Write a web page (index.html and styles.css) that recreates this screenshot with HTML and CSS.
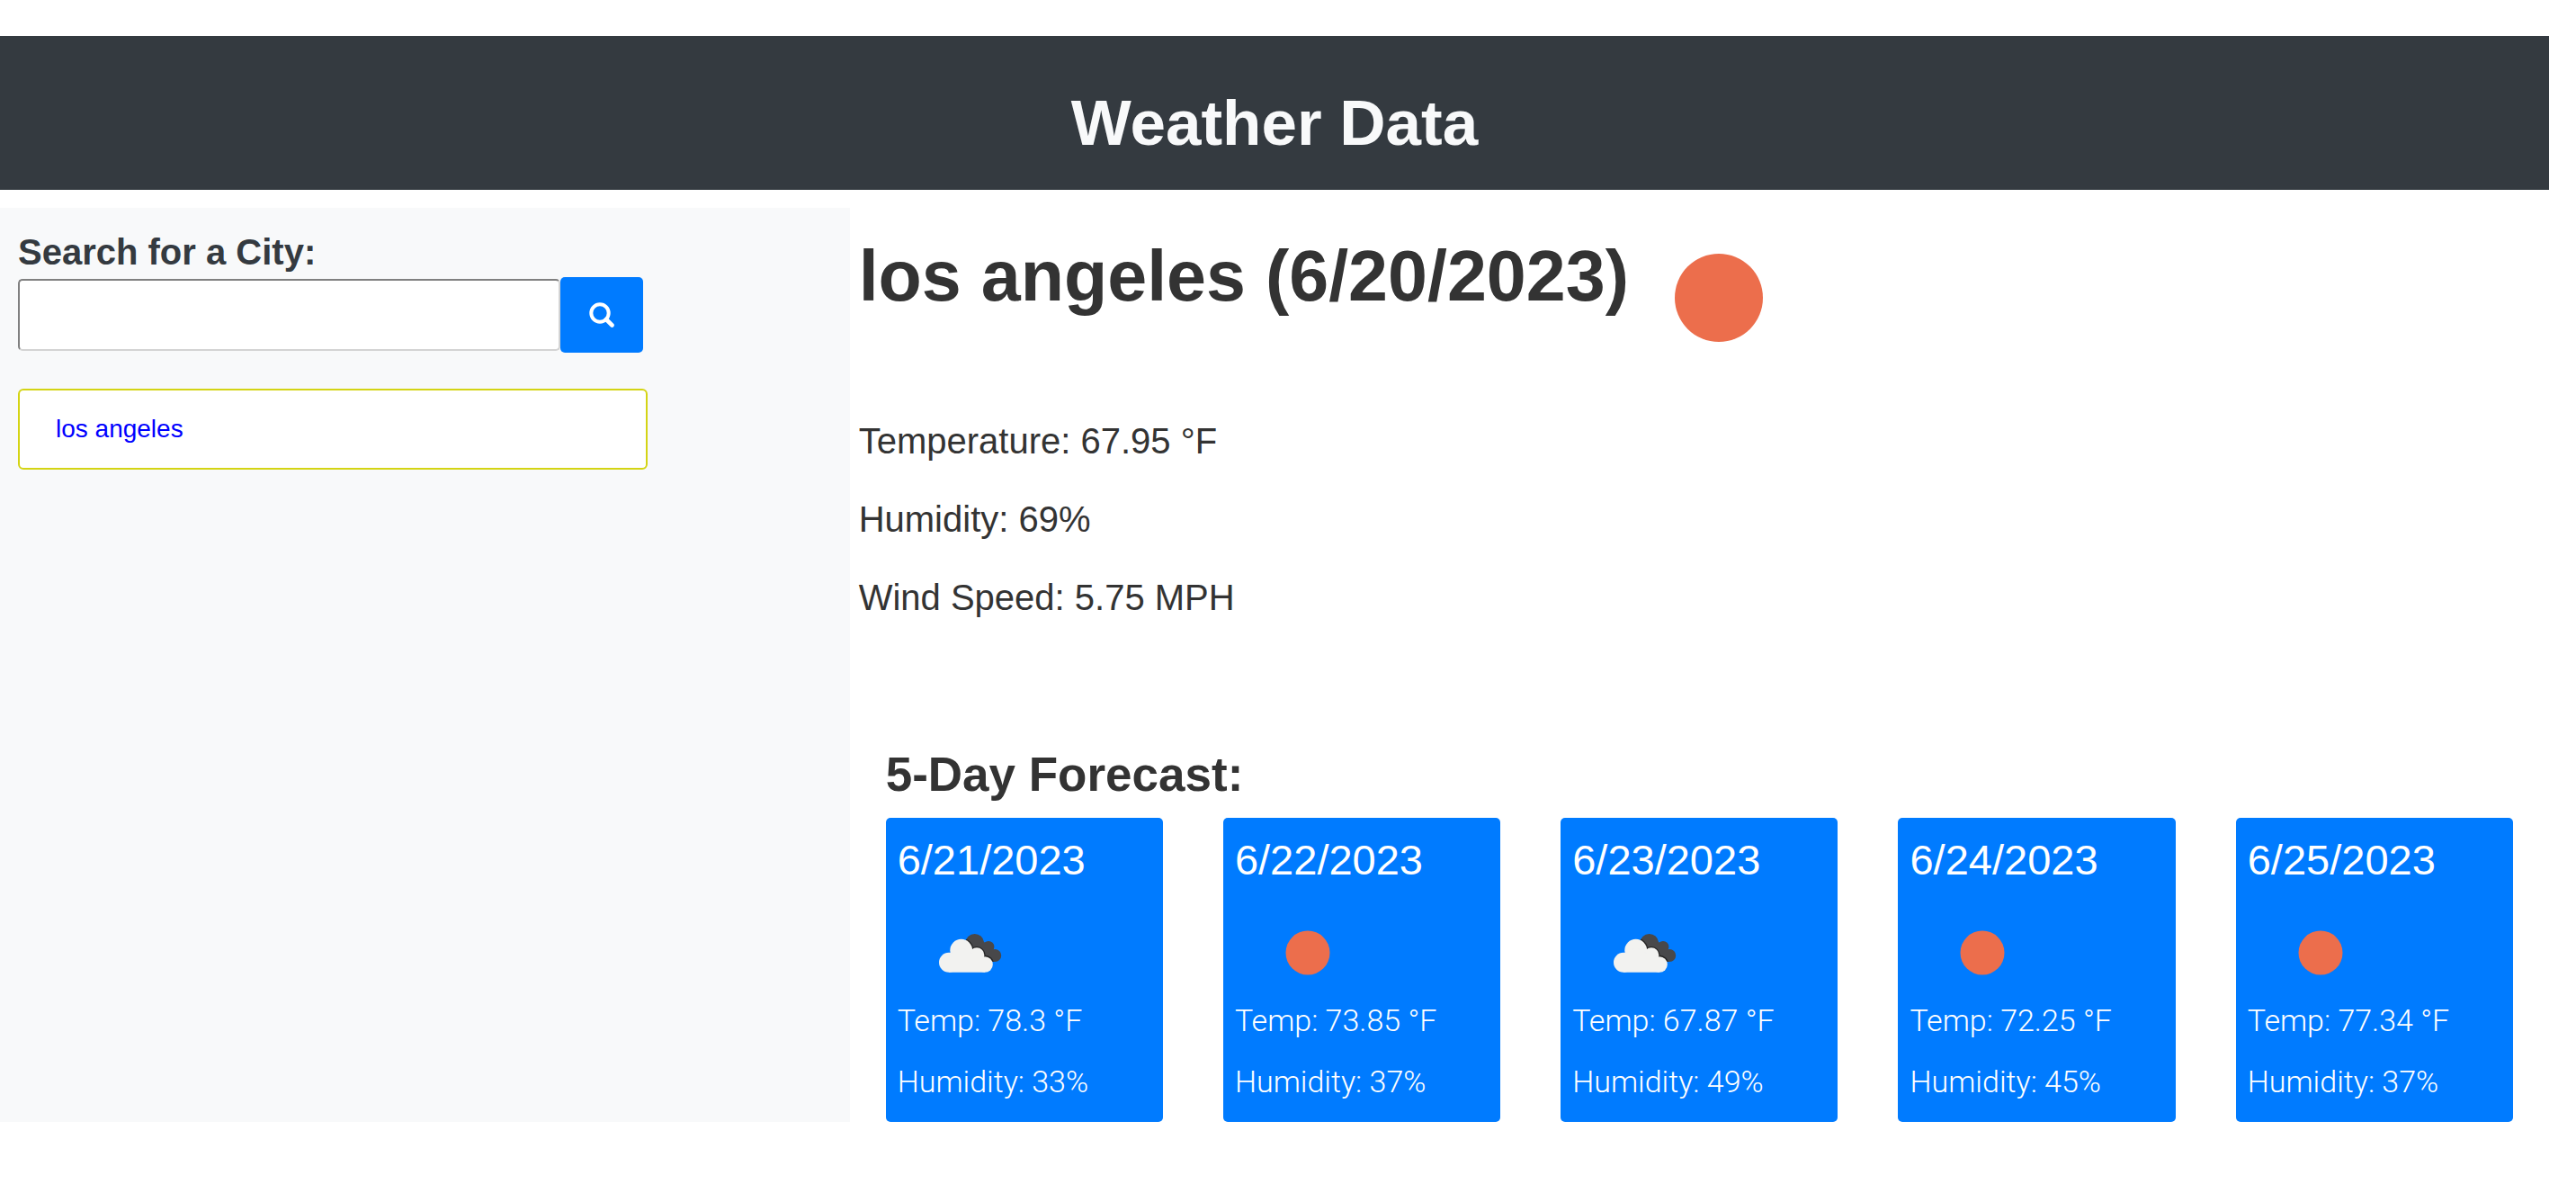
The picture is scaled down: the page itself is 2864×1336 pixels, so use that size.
FILE: index.html
```html
<!DOCTYPE html>
<html lang="en">
<head>
<meta charset="utf-8">
<title>Weather Data</title>
<link rel="stylesheet" href="styles.css">
</head>
<body>
<svg class="sprite" aria-hidden="true">
  <clipPath id="back-cloud">
    <circle cx="54.7" cy="39.3" r="10.4"/><circle cx="70" cy="43.3" r="6.4"/><circle cx="77.2" cy="53" r="7"/><path d="M46 45L60 34L76 47V60H68L54 50Z"/>
  </clipPath>
  <symbol id="sun" viewBox="0 0 100 100">
    <circle cx="50" cy="50" r="24.5" fill="#ec6e4c"/>
  </symbol>
  <symbol id="clouds" viewBox="0 0 100 100">
    <g clip-path="url(#back-cloud)">
      <rect width="100" height="100" fill="#48484a"/>
      <g fill="#222"><circle cx="39.7" cy="47.2" r="13.6"/><circle cx="57" cy="52.7" r="9.6"/><circle cx="66" cy="63" r="10.2"/></g>
    </g>
    <g fill="#f2f2f0"><circle cx="26" cy="60.8" r="11"/><circle cx="39.7" cy="47.2" r="12.4"/><circle cx="57" cy="52.7" r="8.4"/><circle cx="66" cy="63" r="8.8"/><path d="M26 71.8V52L40 44L54 52L66 60V71.8Z"/></g>
  </symbol>
</svg>
<header class="banner"><h1>Weather Data</h1></header>
<div class="layout">
  <aside class="sidebar">
    <label class="search-label" for="city">Search for a City:</label>
    <form class="search">
      <input class="search-input" id="city" type="text">
      <button class="search-button" type="submit" aria-label="Search">
        <svg viewBox="0 0 28 28" width="28" height="28" fill="none" stroke="#fff" stroke-width="4"><circle cx="12" cy="12" r="9.7"/><path d="M19 19L25.5 25.5" stroke-width="4.6" stroke-linecap="round"/></svg>
      </button>
    </form>
    <ul class="history"><li><a href="#">los angeles</a></li></ul>
  </aside>
  <main class="main">
    <section class="current">
      <div class="current-head">
        <h2>los angeles (6/20/2023)</h2>
        <svg class="current-icon"><use href="#sun"/></svg>
      </div>
      <p>Temperature: 67.95 °F</p>
      <p>Humidity: 69%</p>
      <p>Wind Speed: 5.75 MPH</p>
    </section>
    <section class="forecast">
      <h3>5-Day Forecast:</h3>
      <div class="cards">
        <article class="card"><h4>6/21/2023</h4><svg class="card-icon"><use href="#clouds"/></svg><p>Temp: 78.3 °F</p><p>Humidity: 33%</p></article>
        <article class="card"><h4>6/22/2023</h4><svg class="card-icon"><use href="#sun"/></svg><p>Temp: 73.85 °F</p><p>Humidity: 37%</p></article>
        <article class="card"><h4>6/23/2023</h4><svg class="card-icon"><use href="#clouds"/></svg><p>Temp: 67.87 °F</p><p>Humidity: 49%</p></article>
        <article class="card"><h4>6/24/2023</h4><svg class="card-icon"><use href="#sun"/></svg><p>Temp: 72.25 °F</p><p>Humidity: 45%</p></article>
        <article class="card"><h4>6/25/2023</h4><svg class="card-icon"><use href="#sun"/></svg><p>Temp: 77.34 °F</p><p>Humidity: 37%</p></article>
      </div>
    </section>
  </main>
</div>
</body>
</html>
```
FILE: styles.css
```css
* { box-sizing: border-box; }
body {
  margin: 0;
  padding: 40px 30px 0 0;
  background: #fff;
  color: #333;
  font-family: "Liberation Sans", Arial, sans-serif;
  font-size: 40px;
  line-height: 56px;
}
h1, h2, h3, h4, p, ul { margin: 0; padding: 0; }
.sprite { position: absolute; width: 0; height: 0; }
.banner {
  padding: 57px 20px 34px;
  background: #343a40;
  color: #f8f9fa;
  text-align: center;
}
.banner h1 { font-size: 71px; line-height: 80px; }
.layout { display: flex; margin-top: 20px; }
.sidebar {
  width: 33.3333%;
  padding: 21px 20px;
  background: #f8f9fa;
}
.search-label {
  display: block;
  color: #343a40;
  font-weight: 700;
}
.search {
  display: flex;
  align-items: center;
  width: calc(100% - 210px);
}
.search-input {
  flex: 1;
  min-width: 0;
  height: 80px;
  padding: 0 20px;
  border: 2px solid;
  border-color: #808080 #d3d3d3 #d3d3d3 #808080;
  border-radius: 5px;
  background: #fff;
  font: inherit;
}
.search-button {
  display: flex;
  align-items: center;
  justify-content: center;
  width: 92px;
  height: 84px;
  padding: 0;
  border: 0;
  border-radius: 5px;
  background: #007bff;
}
.history {
  width: calc(100% - 205px);
  margin-top: 40px;
  list-style: none;
}
.history li {
  padding: 20px 40px;
  border: 2px solid #d4d414;
  border-radius: 6px;
  background: #fff;
  font-size: 28px;
  line-height: 46px;
}
.history a { color: #00f; text-decoration: none; }
.main { flex: 1; }
.current { padding-left: 10px; }
.current-head {
  display: flex;
  align-items: flex-start;
  height: 231px;
}
.current-head h2 {
  padding-top: 32px;
  font-size: 79px;
  line-height: 88px;
}
.current-icon { width: 200px; height: 200px; }
.current p { margin-bottom: 31px; }
.forecast { padding: 108px 40px 0; }
.forecast h3 {
  margin-bottom: 18px;
  font-size: 53px;
  line-height: 60px;
}
.cards {
  display: grid;
  grid-template-columns: repeat(5, 1fr);
  gap: 67px;
}
.card {
  padding: 20px 13px;
  border-radius: 5px;
  background: #007bff;
  color: #fff;
}
.card h4 {
  font-size: 47px;
  font-weight: 500;
  line-height: 54px;
}
.card-icon {
  display: block;
  width: 100px;
  height: 100px;
  margin: 26px 0 0 31px;
}
.card p {
  font-family: Roboto, "Liberation Sans", sans-serif;
  font-size: 34px;
  font-weight: 300;
  line-height: 50px;
}
.card p + p { margin-top: 18px; }
```
